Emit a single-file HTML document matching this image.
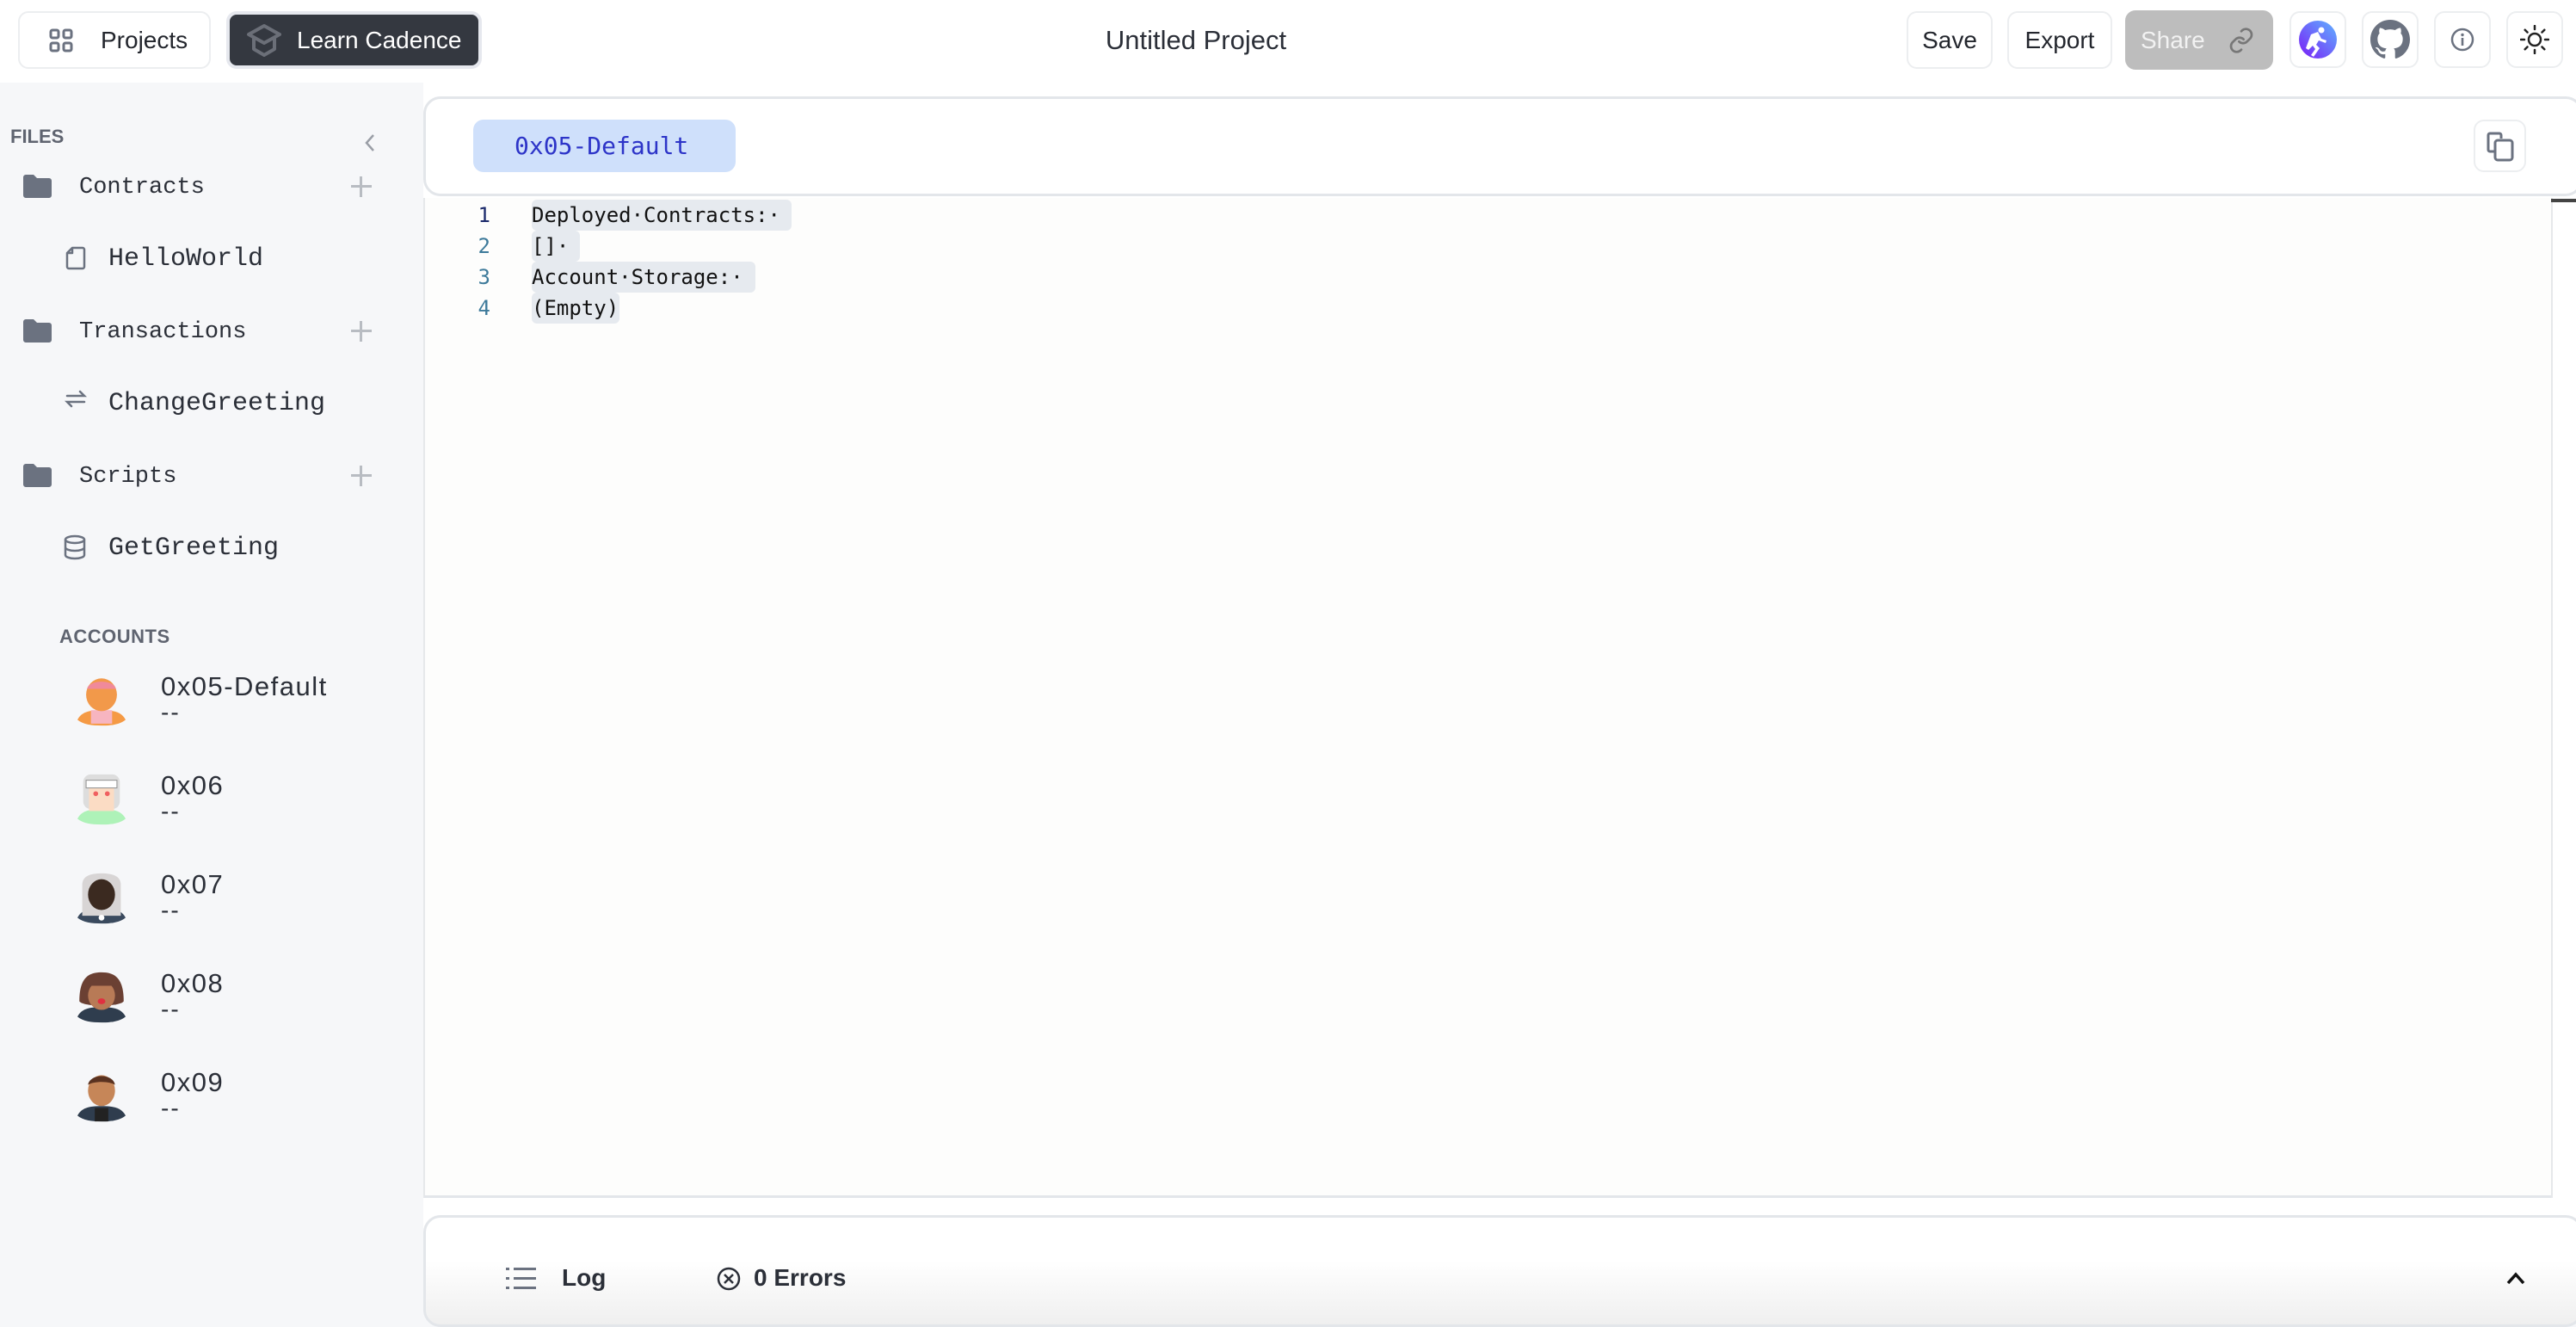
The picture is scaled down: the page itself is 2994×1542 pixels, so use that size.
<!DOCTYPE html>
<html><head><meta charset="utf-8"><style>
*{box-sizing:border-box;margin:0;padding:0}
body{width:2994px;height:1522px;overflow:hidden;background:#f6f7f9;font-family:"Liberation Sans",sans-serif;position:relative;color:#2b2f38}
.abs{position:absolute}
.btn{position:absolute;border:2px solid #eceef0;border-radius:12px;background:#fff;display:flex;align-items:center;justify-content:center;font-size:28px;color:#23262d}
.mono{font-family:"DejaVu Sans Mono","Liberation Mono",monospace}
.side{font-family:"Liberation Mono",monospace;font-size:27px;color:#2b2f38;position:absolute}
.sub{font-size:30px}
.plus{position:absolute;left:408px;width:24px;height:24px}
.plus:before,.plus:after{content:"";position:absolute;background:#b8bcc2}
.plus:before{left:10px;top:0;width:3px;height:24px}
.plus:after{top:10px;left:0;height:3px;width:24px}
.acct{position:absolute;left:187px;font-size:31px;letter-spacing:1.5px;color:#2b2f38}
.dash{position:absolute;left:187px;font-size:28px;color:#2b2f38;letter-spacing:2px}
.av{position:absolute;left:90px;width:56px;height:62px}
.ln{position:absolute;left:540px;width:30px;text-align:right;font-size:24px;color:#3d7a9a}
.code{position:absolute;left:618px;font-size:24px;color:#111;background:#e6eaef;padding:0 14px 0 0;height:36px;line-height:36px;border-radius:6px}
</style></head><body>
<!-- top bar -->
<div class="abs" style="left:0;top:0;width:2994px;height:96px;background:#fff"></div>
<div class="btn" style="left:21px;top:13px;width:224px;height:67px;justify-content:flex-start;padding-left:34px">
<svg width="28" height="28" viewBox="0 0 28 28" style="margin-right:32px"><g fill="none" stroke="#6b7280" stroke-width="3"><rect x="2" y="2" width="9" height="9" rx="2"/><rect x="17" y="2" width="9" height="9" rx="2"/><rect x="2" y="17" width="9" height="9" rx="2"/><rect x="17" y="17" width="9" height="9" rx="2"/></g></svg>Projects</div>
<div class="btn" style="left:263px;top:13px;width:297px;height:67px;background:#343840;border:4px solid #e6e8ee;color:#fff;justify-content:flex-start;padding-left:18px">
<svg width="44" height="40" viewBox="0 0 44 40" style="margin-right:16px"><g fill="none" stroke="#6b6f78" stroke-width="4" stroke-linejoin="round"><path d="M22 3 L40 13 L22 23 L4 13 Z"/><path d="M10 17 V30 L22 37 L34 30 V17"/></g></svg>Learn Cadence</div>
<div class="abs" style="left:1230px;top:29px;width:320px;text-align:center;font-size:31px;color:#2b2f38">Untitled Project</div>
<div class="btn" style="left:2216px;top:13px;width:100px;height:67px">Save</div>
<div class="btn" style="left:2333px;top:13px;width:122px;height:67px">Export</div>
<div class="btn" style="left:2470px;top:12px;width:172px;height:69px;background:#bdbdbd;border-color:#bdbdbd;color:#f2f2f2;justify-content:flex-start;padding-left:16px">Share
<svg width="32" height="32" viewBox="0 0 24 24" style="margin-left:26px"><g fill="none" stroke="#777" stroke-width="2" stroke-linecap="round"><path d="M10 13a5 5 0 0 0 7 0l3-3a5 5 0 0 0-7-7l-1 1"/><path d="M14 11a5 5 0 0 0-7 0l-3 3a5 5 0 0 0 7 7l1-1"/></g></svg></div>
<div class="btn" style="left:2661px;top:13px;width:66px;height:66px">
<svg width="46" height="46" viewBox="0 0 46 46"><defs><linearGradient id="g" x1="0" y1="1" x2="1" y2="0"><stop offset="0" stop-color="#7a1cf6"/><stop offset="1" stop-color="#5fb4ff"/></linearGradient></defs><circle cx="23" cy="23" r="22" fill="url(#g)"/><g fill="#fff"><circle cx="27" cy="12" r="3.5"/><path d="M15 17l8-3 4 8 6 2-1 3-8-3-3 5 4 4-7 10-3-2 5-7-3-4-5 5-3-2z"/></g></svg></div>
<div class="btn" style="left:2745px;top:13px;width:66px;height:66px">
<svg width="46" height="46" viewBox="0 0 16 16"><path fill="#6b7280" d="M8 0C3.58 0 0 3.58 0 8c0 3.54 2.29 6.53 5.47 7.59.4.07.55-.17.55-.38v-1.34c-2.23.48-2.7-1.07-2.7-1.07-.36-.92-.89-1.17-.89-1.17-.73-.5.05-.49.05-.49.8.06 1.23.83 1.23.83.72 1.22 1.87.87 2.33.66.07-.52.28-.87.5-1.07-1.78-.2-3.64-.89-3.64-3.95 0-.87.31-1.59.82-2.15-.08-.2-.36-1.02.08-2.12 0 0 .67-.21 2.2.82a7.6 7.6 0 0 1 4 0c1.53-1.04 2.2-.82 2.2-.82.44 1.1.16 1.92.08 2.12.51.56.82 1.27.82 2.15 0 3.07-1.87 3.75-3.65 3.95.29.25.54.73.54 1.48v2.2c0 .21.15.46.55.38A8 8 0 0 0 16 8c0-4.42-3.58-8-8-8z"/></svg></div>
<div class="btn" style="left:2829px;top:13px;width:66px;height:66px">
<svg width="28" height="28" viewBox="0 0 28 28"><circle cx="14" cy="14" r="12" fill="none" stroke="#6b7280" stroke-width="2.5"/><circle cx="14" cy="8.5" r="1.7" fill="#6b7280"/><rect x="12.7" y="12" width="2.6" height="9" fill="#6b7280"/></svg></div>
<div class="btn" style="left:2913px;top:13px;width:66px;height:66px">
<svg width="34" height="34" viewBox="0 0 34 34"><circle cx="17" cy="17" r="7" fill="none" stroke="#222" stroke-width="2.5"/><g stroke="#222" stroke-width="2.5" stroke-linecap="round"><path d="M17 1v4M17 29v4M1 17h4M29 17h4M5.7 5.7l2.8 2.8M25.5 25.5l2.8 2.8M5.7 28.3l2.8-2.8M25.5 8.5l2.8-2.8"/></g></svg></div>

<!-- sidebar -->
<div class="abs" style="left:12px;top:146px;font-size:22px;font-weight:bold;color:#5f6470">FILES</div>
<svg class="abs" style="left:422px;top:154px" width="16" height="24" viewBox="0 0 16 24"><path d="M12 3L4 12l8 9" fill="none" stroke="#9a9ea6" stroke-width="2.5"/></svg>
<svg class="abs" style="left:27px;top:203px" width="33" height="27" viewBox="0 0 33 27"><path d="M0 3a3 3 0 0 1 3-3h9l4 4h14a3 3 0 0 1 3 3v17a3 3 0 0 1-3 3H3a3 3 0 0 1-3-3z" fill="#6b7280"/></svg>
<div class="side" style="left:92px;top:203px">Contracts</div><div class="plus" style="top:205px"></div>
<svg class="abs" style="left:76px;top:286px" width="24" height="28" viewBox="0 0 24 28"><path d="M8 2h12a2 2 0 0 1 2 2v20a2 2 0 0 1-2 2H4a2 2 0 0 1-2-2V8z M8 2v6H2" fill="none" stroke="#6b7280" stroke-width="2.5" stroke-linejoin="round"/></svg>
<div class="side sub" style="left:126px;top:284px">HelloWorld</div>
<svg class="abs" style="left:27px;top:371px" width="33" height="27" viewBox="0 0 33 27"><path d="M0 3a3 3 0 0 1 3-3h9l4 4h14a3 3 0 0 1 3 3v17a3 3 0 0 1-3 3H3a3 3 0 0 1-3-3z" fill="#6b7280"/></svg>
<div class="side" style="left:92px;top:371px">Transactions</div><div class="plus" style="top:373px"></div>
<svg class="abs" style="left:75px;top:452px" width="26" height="22" viewBox="0 0 26 22"><g fill="none" stroke="#6b7280" stroke-width="2.5" stroke-linecap="round"><path d="M3 8h20l-5-5"/><path d="M23 15H3l5 5"/></g></svg>
<div class="side sub" style="left:126px;top:452px">ChangeGreeting</div>
<svg class="abs" style="left:27px;top:539px" width="33" height="27" viewBox="0 0 33 27"><path d="M0 3a3 3 0 0 1 3-3h9l4 4h14a3 3 0 0 1 3 3v17a3 3 0 0 1-3 3H3a3 3 0 0 1-3-3z" fill="#6b7280"/></svg>
<div class="side" style="left:92px;top:539px">Scripts</div><div class="plus" style="top:541px"></div>
<svg class="abs" style="left:73px;top:621px" width="28" height="30" viewBox="0 0 28 30"><g fill="none" stroke="#6b7280" stroke-width="2.5"><ellipse cx="14" cy="6" rx="11" ry="4"/><path d="M3 6v18c0 2.2 5 4 11 4s11-1.8 11-4V6M3 15c0 2.2 5 4 11 4s11-1.8 11-4"/></g></svg>
<div class="side sub" style="left:126px;top:620px">GetGreeting</div>

<div class="abs" style="left:69px;top:727px;font-size:22px;font-weight:bold;color:#5f6470;letter-spacing:0.5px">ACCOUNTS</div>
<!-- avatars -->
<svg class="av" style="top:783px" viewBox="0 0 50 52"><path d="M0 46c4-8 12-10 25-10s21 2 25 10c-6 5-15 6-25 6S6 51 0 46z" fill="#f59a45"/><rect x="14" y="36" width="22" height="14" fill="#f7b5c0"/><ellipse cx="25" cy="20" rx="16" ry="17" fill="#f2994a"/><path d="M10 14c2-10 28-10 30 0" fill="#f08a9a"/></svg>
<div class="acct" style="top:780px">0x05-Default</div><div class="dash" style="top:812px">--</div>
<svg class="av" style="top:898px" viewBox="0 0 50 52"><path d="M0 46c4-8 12-10 25-10s21 2 25 10c-6 5-15 6-25 6S6 51 0 46z" fill="#aef2b8"/><rect x="6" y="0" width="38" height="36" rx="8" fill="#ddd"/><rect x="12" y="12" width="26" height="26" fill="#fbdcc4"/><rect x="9" y="6" width="32" height="8" fill="#fff" stroke="#999"/><circle cx="19" cy="20" r="2.5" fill="#f06060"/><circle cx="31" cy="20" r="2.5" fill="#f06060"/></svg>
<div class="acct" style="top:895px">0x06</div><div class="dash" style="top:927px">--</div>
<svg class="av" style="top:1013px" viewBox="0 0 50 52"><path d="M0 46c4-8 12-10 25-10s21 2 25 10c-6 5-15 6-25 6S6 51 0 46z" fill="#3a4a5e"/><path d="M5 44V12C5 2 15 0 25 0s20 2 20 12v32z" fill="#d8d5d5"/><ellipse cx="25" cy="22" rx="14" ry="16" fill="#3b2a20"/><circle cx="25" cy="46" r="3" fill="#fff"/></svg>
<div class="acct" style="top:1010px">0x07</div><div class="dash" style="top:1042px">--</div>
<svg class="av" style="top:1128px" viewBox="0 0 50 52"><path d="M0 46c4-8 12-10 25-10s21 2 25 10c-6 5-15 6-25 6S6 51 0 46z" fill="#2f3d4e"/><path d="M2 30C2 5 12 0 25 0s23 5 23 30c-4 6-42 6-46 0z" fill="#6b4033"/><ellipse cx="25" cy="24" rx="14" ry="15" fill="#b87a56"/><path d="M11 14c4-8 24-8 28 0" fill="#6b4033"/><ellipse cx="25" cy="30" rx="4" ry="3" fill="#e03040"/></svg>
<div class="acct" style="top:1125px">0x08</div><div class="dash" style="top:1157px">--</div>
<svg class="av" style="top:1243px" viewBox="0 0 50 52"><path d="M0 46c4-8 12-10 25-10s21 2 25 10c-6 5-15 6-25 6S6 51 0 46z" fill="#2f3d4e"/><rect x="18" y="38" width="14" height="14" fill="#222"/><ellipse cx="25" cy="20" rx="14" ry="16" fill="#c68658"/><path d="M11 14c2-12 26-12 28 0c-6-4-22-4-28 0z" fill="#5a3220"/></svg>
<div class="acct" style="top:1240px">0x09</div><div class="dash" style="top:1272px">--</div>

<!-- main -->
<div class="abs" style="left:492px;top:96px;width:2502px;height:1426px;background:#fff"></div>
<div class="abs" style="left:492px;top:112px;width:2510px;height:116px;background:#fff;border:3px solid #e3e6ea;border-radius:20px"></div>
<div class="abs mono" style="left:550px;top:139px;width:305px;height:61px;background:#cfe0fb;border-radius:12px;color:#2d34c8;font-size:28px;line-height:61px;padding-left:48px;font-family:'DejaVu Sans Mono',monospace">0x05-Default</div>
<div class="btn" style="left:2875px;top:139px;width:61px;height:61px;border-radius:12px">
<svg width="34" height="36" viewBox="0 0 34 36"><g fill="none" stroke="#6b7280" stroke-width="3" stroke-linejoin="round"><path d="M10 24H5a2 2 0 0 1-2-2V5a2 2 0 0 1 2-2h11a2 2 0 0 1 2 2v4"/><rect x="11" y="11" width="20" height="23" rx="3"/></g></svg></div>
<div class="abs" style="left:492px;top:230px;width:2473px;height:1162px;background:#fdfdfc;border-left:2px solid #e6e8ea;border-bottom:3px solid #e3e6ea"></div>
<div class="abs" style="left:2965px;top:230px;width:2px;height:1162px;background:#e6e8ea"></div>
<div class="abs" style="left:2965px;top:231px;width:29px;height:4px;background:#444"></div>
<div class="ln mono" style="top:232px;line-height:36px;color:#1b2a6b">1</div>
<div class="ln mono" style="top:268px;line-height:36px">2</div>
<div class="ln mono" style="top:304px;line-height:36px">3</div>
<div class="ln mono" style="top:340px;line-height:36px">4</div>
<div class="code mono" style="top:232px;width:302px">Deployed·Contracts:·</div>
<div class="code mono" style="top:268px;width:56px">[]·</div>
<div class="code mono" style="top:304px;width:260px">Account·Storage:·</div>
<div class="code mono" style="top:340px;width:102px">(Empty)</div>

<!-- bottom panel -->
<div class="abs" style="left:492px;top:1412px;width:2510px;height:130px;background:linear-gradient(#fff 40%,#efefef);border:3px solid #e3e6ea;border-radius:20px"></div>
<svg class="abs" style="left:588px;top:1472px" width="36" height="28" viewBox="0 0 36 28"><g fill="#6b7280"><rect x="0" y="1" width="4" height="3"/><rect x="0" y="12" width="4" height="3"/><rect x="0" y="23" width="4" height="3"/><rect x="9" y="1" width="26" height="3"/><rect x="9" y="12" width="26" height="3"/><rect x="9" y="23" width="26" height="3"/></g></svg>
<div class="abs" style="left:653px;top:1469px;font-size:28px;font-weight:bold;color:#2b2f38">Log</div>
<svg class="abs" style="left:832px;top:1471px" width="30" height="30" viewBox="0 0 30 30"><circle cx="15" cy="15" r="12" fill="none" stroke="#2b2f38" stroke-width="2.5"/><path d="M10 10l10 10M20 10L10 20" stroke="#2b2f38" stroke-width="2.5"/></svg>
<div class="abs" style="left:876px;top:1469px;font-size:28px;font-weight:bold;color:#2b2f38">0 Errors</div>
<svg class="abs" style="left:2912px;top:1476px" width="24" height="18" viewBox="0 0 24 18"><path d="M3 15L12 5l9 10" fill="none" stroke="#111" stroke-width="3.5"/></svg>
</body></html>
